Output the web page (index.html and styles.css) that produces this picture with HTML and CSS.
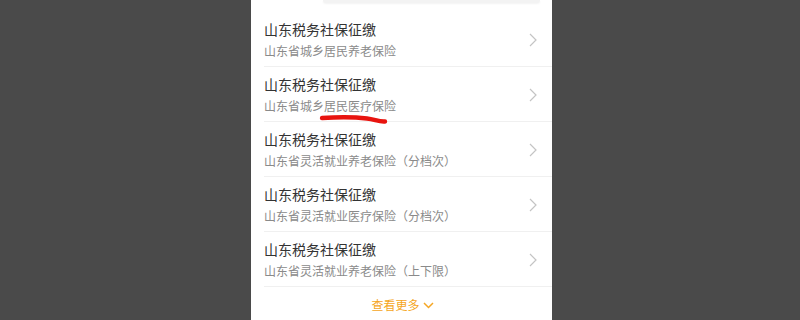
FILE: index.html
```html
<!DOCTYPE html>
<html lang="zh">
<head>
    <meta charset="UTF-8">
    <title>社保征缴</title>
    <link rel="stylesheet" href="styles.css">
</head>
<body>

<div class="screen">
    <div class="top-card"></div>

    <div class="list">
        <div class="item">
            <div class="item-text">
                <div class="item-title">山东税务社保征缴</div>
                <div class="item-sub">山东省城乡居民养老保险</div>
            </div>
            <svg class="arrow" width="8" height="14" viewBox="0 0 8 14"><path d="M1 1 L7 7 L1 13" fill="none" stroke="#c4c4c4" stroke-width="1.2"/></svg>
        </div>
        <div class="item">
            <div class="item-text">
                <div class="item-title">山东税务社保征缴</div>
                <div class="item-sub">山东省城乡居民医疗保险</div>
            </div>
            <svg class="arrow" width="8" height="14" viewBox="0 0 8 14"><path d="M1 1 L7 7 L1 13" fill="none" stroke="#c4c4c4" stroke-width="1.2"/></svg>
            <!-- trait rouge dessiné à la main -->
            <svg class="mark" width="70" height="12" viewBox="0 0 70 12"><path d="M3 4 C 18 3, 36 3, 48 4.5 C 56 5.5, 60 8, 66 7.5" fill="none" stroke="#e8140f" stroke-width="4.4" stroke-linecap="round"/></svg>
        </div>
        <div class="item">
            <div class="item-text">
                <div class="item-title">山东税务社保征缴</div>
                <div class="item-sub">山东省灵活就业养老保险（分档次）</div>
            </div>
            <svg class="arrow" width="8" height="14" viewBox="0 0 8 14"><path d="M1 1 L7 7 L1 13" fill="none" stroke="#c4c4c4" stroke-width="1.2"/></svg>
        </div>
        <div class="item">
            <div class="item-text">
                <div class="item-title">山东税务社保征缴</div>
                <div class="item-sub">山东省灵活就业医疗保险（分档次）</div>
            </div>
            <svg class="arrow" width="8" height="14" viewBox="0 0 8 14"><path d="M1 1 L7 7 L1 13" fill="none" stroke="#c4c4c4" stroke-width="1.2"/></svg>
        </div>
        <div class="item">
            <div class="item-text">
                <div class="item-title">山东税务社保征缴</div>
                <div class="item-sub">山东省灵活就业养老保险（上下限）</div>
            </div>
            <svg class="arrow" width="8" height="14" viewBox="0 0 8 14"><path d="M1 1 L7 7 L1 13" fill="none" stroke="#c4c4c4" stroke-width="1.2"/></svg>
        </div>
    </div>

    <div class="more">
        <span>查看更多</span>
        <svg width="11" height="7" viewBox="0 0 11 7"><path d="M1 1 L5.5 5.5 L10 1" fill="none" stroke="#f5a623" stroke-width="1.5"/></svg>
    </div>
</div>

</body>
</html>
```

FILE: styles.css
```css
html, body {
    margin: 0;
    height: 100%;
}
body {
    background-color: #4a4a4a;
    font-family: "Noto Sans CJK SC", "Noto Sans", sans-serif;
    overflow: hidden;
}
.screen {
    width: 301px;
    height: 320px;
    margin-left: 251px;
    background-color: white;
}
.top-card {
    height: 3px;
    margin: 0 12px 9px 72px;
    background-color: #f3f3f3;
    border-radius: 0 0 8px 8px;
    box-shadow: 0 1px 2px rgba(0, 0, 0, 0.05);
}
.list {
    padding-left: 13px;
}
.item {
    position: relative;
    display: flex;
    align-items: center;
    justify-content: space-between;
    height: 54px;
    border-bottom: 1px solid #f0f0f0;
    padding-right: 15px;
}
.item-text {
    padding-top: 1px;
}
.item-title {
    font-size: 14px;
    line-height: 20px;
    color: #333;
}
.item-sub {
    margin-top: 2px;
    font-size: 12px;
    line-height: 20px;
    color: #8a8a8a;
}
.arrow {
    margin-top: 2px;
}
.mark {
    position: absolute;
    left: 55px;
    top: 47px;
}
.more {
    display: flex;
    align-items: center;
    justify-content: center;
    gap: 3px;
    padding-top: 9px;
    padding-left: 2px;
    font-size: 12px;
    line-height: 18px;
    color: #f5a623;
}
```
